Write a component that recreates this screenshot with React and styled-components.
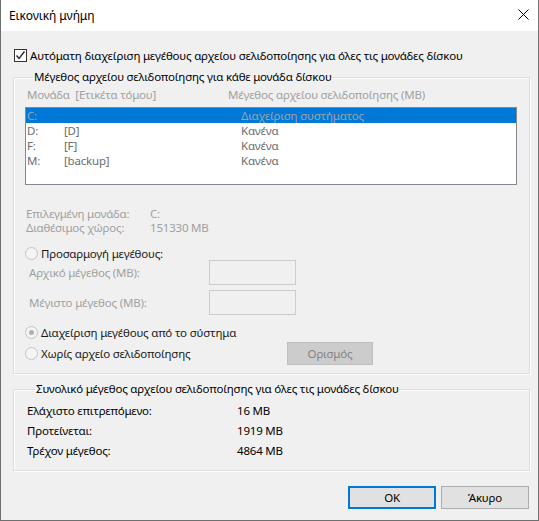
import React from 'react'
import styled, { createGlobalStyle } from 'styled-components'

const Global = createGlobalStyle`
    html, body {
        margin: 0;
        padding: 0;
        background: #ffffff;
    }
    body {
        font-family: "Noto Sans", "Open Sans", sans-serif;
        font-size: 11.5px;
        letter-spacing: -0.2px;
        color: #000;
    }
`

const drives = [
    { letter: "C:", label: "", size: "Διαχείριση συστήματος", selected: true },
    { letter: "D:", label: "[D]", size: "Κανένα" },
    { letter: "F:", label: "[F]", size: "Κανένα" },
    { letter: "M:", label: "[backup]", size: "Κανένα" },
]

const totals = [
    { name: "Ελάχιστο επιτρεπόμενο:", value: "16 MB" },
    { name: "Προτείνεται:", value: "1919 MB" },
    { name: "Τρέχον μέγεθος:", value: "4864 MB" },
]

function App() {
    return (
        <Window>
            <Global />
            <TitleBar>
                <span>Εικονική μνήμη</span>
                <CloseButton>
                    <svg width="11" height="11" viewBox="0 0 11 11">
                        <path d="M0.5 0.5 L10.5 10.5 M10.5 0.5 L0.5 10.5" stroke="#000" strokeWidth="1" />
                    </svg>
                </CloseButton>
            </TitleBar>

            <Body>
                <CheckRow>
                    <CheckBox>
                        <svg width="11" height="11" viewBox="0 0 11 11">
                            <path d="M1.5 5.5 L4 8.5 L9.5 1.5" stroke="#222" strokeWidth="1.3" fill="none" />
                        </svg>
                    </CheckBox>
                    Αυτόματη διαχείριση μεγέθους αρχείου σελιδοποίησης για όλες τις μονάδες δίσκου
                </CheckRow>

                <Group>
                    <Legend>Μέγεθος αρχείου σελιδοποίησης για κάθε μονάδα δίσκου</Legend>
                    <ListHeader>
                        <span>Μονάδα&nbsp; [Ετικέτα τόμου]</span>
                        <span>Μέγεθος αρχείου σελιδοποίησης (MB)</span>
                    </ListHeader>
                    <ListBox>
                        {drives.map((d) => (
                            <DriveRow key={d.letter} $selected={d.selected}>
                                <span>{d.letter}</span>
                                <span>{d.label}</span>
                                <span>{d.size}</span>
                            </DriveRow>
                        ))}
                    </ListBox>

                    <InfoGrid>
                        <span>Επιλεγμένη μονάδα:</span>
                        <span>C:</span>
                        <span>Διαθέσιμος χώρος:</span>
                        <span>151330 MB</span>
                    </InfoGrid>

                    <RadioRow $top={10}>
                        <Radio />
                        Προσαρμογή μεγέθους:
                    </RadioRow>
                    <SizeRow $top={-1}>
                        <SizeLabel>Αρχικό μέγεθος (MB):</SizeLabel>
                        <SizeInput />
                    </SizeRow>
                    <SizeRow $top={5}>
                        <SizeLabel>Μέγιστο μέγεθος (MB):</SizeLabel>
                        <SizeInput />
                    </SizeRow>
                    <RadioRow $top={9}>
                        <Radio $checked />
                        Διαχείριση μεγέθους από το σύστημα
                    </RadioRow>
                    <LastRow>
                        <RadioRow>
                            <Radio />
                            Χωρίς αρχείο σελιδοποίησης
                        </RadioRow>
                        <SetButton>Ορισμός</SetButton>
                    </LastRow>
                </Group>

                <Group $totals>
                    <Legend>Συνολικό μέγεθος αρχείου σελιδοποίησης για όλες τις μονάδες δίσκου</Legend>
                    <TotalsGrid>
                        {totals.map((t) => (
                            <React.Fragment key={t.name}>
                                <span>{t.name}</span>
                                <span>{t.value}</span>
                            </React.Fragment>
                        ))}
                    </TotalsGrid>
                </Group>

                <ButtonRow>
                    <DialogButton $default>OK</DialogButton>
                    <DialogButton>Άκυρο</DialogButton>
                </ButtonRow>
            </Body>
        </Window>
    )
}

const Window = styled.div`
    width: 539px;
    height: 521px;
    box-sizing: border-box;
    border: 1px solid #6f6f6f;
    border-top: none;
    display: flex;
    flex-direction: column;
    background: #f0f0f0;
    overflow: hidden;
`

const TitleBar = styled.div`
    height: 31px;
    flex: none;
    background: #ffffff;
    display: flex;
    align-items: center;
    justify-content: space-between;
    padding: 0 8px 1px 8px;
    box-sizing: border-box;
    font-size: 12px;
    letter-spacing: -0.1px;
`

const CloseButton = styled.div`
    width: 11px;
    height: 11px;
    display: flex;
    margin-right: 1px;
    margin-bottom: 2px;
`

const Body = styled.div`
    flex: 1;
    padding: 16px 8px 0 12px;
    display: flex;
    flex-direction: column;
`

const CheckRow = styled.div`
    display: flex;
    align-items: center;
    height: 16px;
    gap: 3px;
    margin-left: 1px;
    white-space: nowrap;
`

const CheckBox = styled.div`
    width: 11px;
    height: 11px;
    border: 1px solid #333;
    background: #fff;
    display: flex;
`

const Group = styled.fieldset`
    margin: ${p => p.$totals ? '7px 0 0 0' : '6px 0 0 0'};
    padding: ${p => p.$totals ? '6px 12px 11px 13px' : '2px 12px 8px 11px'};
    border: 1px solid #dcdcdc;
    box-shadow: inset 1px 1px 0 #ffffff, 1px 1px 0 #ffffff;
    min-width: 0;
`

const Legend = styled.legend`
    padding: 0 1px;
    margin-left: 8px;
    line-height: 16px;
    white-space: nowrap;
`

const ListHeader = styled.div`
    display: grid;
    grid-template-columns: 201px 1fr;
    padding-left: 2px;
    line-height: 16px;
    color: #a0a0a0;
    white-space: nowrap;
`

const ListBox = styled.div`
    margin-top: 4px;
    height: 76px;
    border: 1px solid #828790;
    background: #ffffff;
`

const DriveRow = styled.div`
    display: grid;
    grid-template-columns: 37px 177px 1fr;
    padding-left: 1px;
    height: 15px;
    line-height: 15px;
    white-space: nowrap;
    background: ${p => p.$selected ? '#0078d7' : 'transparent'};
    color: ${p => p.$selected ? '#9aa3ad' : '#6d6d6d'};
`

const InfoGrid = styled.div`
    margin-top: 22px;
    display: grid;
    grid-template-columns: 124px 1fr;
    line-height: 14px;
    color: #a0a0a0;
    padding-left: 1px;
`

const RadioRow = styled.div`
    display: flex;
    align-items: center;
    gap: 3px;
    height: 16px;
    margin-top: ${p => p.$top || 0}px;
    white-space: nowrap;
    color: #1a1a1a;
`

const Radio = styled.span`
    width: 11px;
    height: 11px;
    border-radius: 50%;
    border: 1px solid #c4c4c4;
    background: #f4f4f4;
    display: flex;
    align-items: center;
    justify-content: center;

    &::after {
        content: "";
        width: 5px;
        height: 5px;
        border-radius: 50%;
        background: ${p => p.$checked ? '#b0b0b0' : 'transparent'};
    }
`

const SizeRow = styled.div`
    display: flex;
    align-items: center;
    margin-top: ${p => p.$top}px;
`

const SizeLabel = styled.span`
    width: 180px;
    padding-left: 4px;
    color: #a0a0a0;
    white-space: nowrap;
`

const SizeInput = styled.div`
    width: 85px;
    height: 23px;
    border: 1px solid #cccccc;
    background: #f0f0f0;
`

const LastRow = styled.div`
    display: flex;
    align-items: center;
    justify-content: space-between;
    width: 348px;
    height: 23px;
    margin-top: 2px;
`

const SetButton = styled.div`
    width: 84px;
    height: 21px;
    border: 1px solid #bfbfbf;
    background: #cccccc;
    color: #838383;
    display: flex;
    align-items: center;
    justify-content: center;
`

const TotalsGrid = styled.div`
    display: grid;
    grid-template-columns: 210px 1fr;
    row-gap: 4px;
    line-height: 16px;
    color: #000;
`

const ButtonRow = styled.div`
    display: flex;
    justify-content: flex-end;
    gap: 5px;
    margin-top: 15px;
    padding-right: 1px;
`

const DialogButton = styled.div`
    height: ${p => p.$default ? '19px' : '21px'};
    border: ${p => p.$default ? '2px solid #0078d7' : '1px solid #adadad'};
    width: ${p => p.$default ? '84px' : '86px'};
    background: #e1e1e1;
    display: flex;
    align-items: center;
    justify-content: center;
`

export default App
